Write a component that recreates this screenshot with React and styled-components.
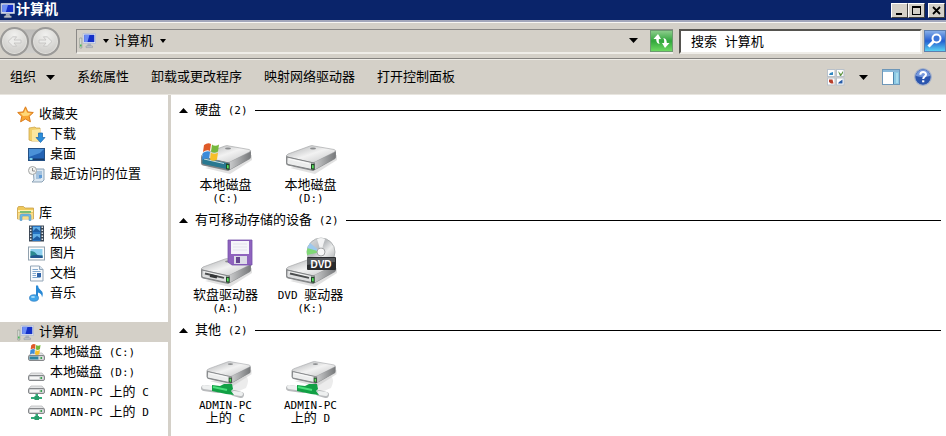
import React from "react";
import styled, { createGlobalStyle, css } from "styled-components";

const GlobalStyle = createGlobalStyle`
  * { box-sizing: border-box; }
  html, body { margin: 0; }
  body, button, input {
    font-family: "Liberation Mono", "Noto Sans CJK SC", sans-serif;
    font-size: 13px;
    line-height: 20px;
    color: #000;
  }
  button { border: 0; padding: 0; background: none; }
  svg { display: block; flex: none; overflow: visible; }
`;

const Window = styled.div`
  display: flex;
  flex-direction: column;
  height: 100vh;
  overflow: hidden;
  background: #d4d0c8;
`;

const TitleBar = styled.header`
  display: flex;
  align-items: center;
  flex: none;
  height: 20px;
  padding-right: 1px;
  background: #0a246a;
`;

const Title = styled.h1`
  flex: 1;
  margin: 0;
  padding-left: 1px;
  font-size: 14px;
  line-height: 20px;
  font-weight: 700;
  color: #fff;
`;

const CaptionButton = styled.button`
  display: grid;
  place-items: center;
  width: 17px;
  height: 15px;
  margin-left: ${(p) => (p.$apart ? "3px" : "0")};
  background: #d4d0c8;
  border: 1px solid;
  border-color: #fff #404040 #404040 #fff;
`;

const AddressRow = styled.div`
  display: flex;
  align-items: center;
  flex: none;
  height: 39px;
  padding-top: 2px;
  border-top: 2px solid #a3a7bb;
  border-bottom: 1px solid #858380;
  box-shadow: inset 0 1px #f8f7f4;
`;

const NavButtons = styled.div`
  display: flex;
  gap: 2px;
  width: 60px;
  margin-right: 16px;
  border-radius: 15px;
  background: linear-gradient(#d4d0c8 8%, #bdbcba 9%, #cfcecb 88%, #d4d0c8 89%);
`;

const NavButton = styled.button`
  display: grid;
  place-items: center;
  width: 29px;
  height: 29px;
  border: 2px solid #9b9a98;
  border-radius: 50%;
  background: radial-gradient(circle at 50% 25%, #f1f1ef, #d6d5d2 60%, #c6c5c2);
  box-shadow: inset 0 0 1px 1px #e4e3df;
`;

const AddressField = styled.div`
  display: flex;
  align-items: center;
  flex: 1;
  min-width: 0;
  height: 25px;
  border: 1px solid;
  border-width: 1px 0 2px 1px;
  border-color: #8b8987 #efede8 #efede8 #8b8987;
`;

const Crumb = styled.button`
  display: flex;
  align-items: center;
  gap: 7px;
  margin-left: ${(p) => (p.$first ? "2px" : "5px")};
`;

const Spacer = styled.span`
  flex: 1;
`;

const RefreshButton = styled.button`
  width: 23px;
  height: 22px;
  margin-left: 12px;
`;

const SearchBox = styled.form`
  display: flex;
  align-items: center;
  width: 267px;
  margin-left: 6px;
  gap: 2px;
`;

const SearchInput = styled.input`
  flex: 1;
  min-width: 0;
  height: 25px;
  padding: 2px 0 0 10px;
  border: 2px solid;
  border-color: #55534f #efede8 #efede8 #55534f;
  background: #fff;
  outline: 0;
  &::placeholder { color: #000; opacity: 1; }
`;

const SearchButton = styled.button`
  width: 22px;
  height: 22px;
`;

const CommandBar = styled.div`
  display: flex;
  align-items: center;
  flex: none;
  height: 36px;
  padding: 0 14px 0 10px;
  gap: 22px;
  border-top: 1px solid #efede8;
  border-bottom: 1px solid #e8e5df;
`;

const Command = styled.button`
  display: flex;
  align-items: center;
  gap: 10px;
  white-space: nowrap;
`;

const ViewTools = styled.div`
  display: flex;
  align-items: center;
  margin-left: auto;
  gap: 14px;
`;

const Body = styled.div`
  display: flex;
  flex: 1;
  min-height: 0;
  background: #fff;
`;

const Sidebar = styled.nav`
  display: flex;
  flex-direction: column;
  flex: none;
  gap: 19px;
  width: 171px;
  padding-top: 9px;
  border-right: 3px solid #d4d0c8;
`;

const NavList = styled.ul`
  margin: 0;
  padding: 0;
  list-style: none;
`;

const NavLink = styled.a`
  display: flex;
  align-items: center;
  gap: 4px;
  height: 20px;
  padding-left: ${(p) => (p.$child ? "28px" : "17px")};
  color: #000;
  text-decoration: none;
  white-space: nowrap;
  ${(p) => p.$selected && css`background: #d4d0c8;`}
`;

const Label = styled.span`
  padding-top: 2px;
`;

const Latin = styled.span`
  font-family: "DejaVu Sans Mono", monospace;
  font-size: 11px;
  white-space: pre;
`;

const Content = styled.main`
  flex: 1;
  min-width: 0;
  padding: 5px 5px 0 8px;
`;

const Group = styled.section`
  padding-bottom: 5px;
`;

const GroupHeader = styled.h2`
  display: flex;
  align-items: center;
  gap: 7px;
  margin: 0;
  height: 20px;
  font-size: 13px;
  font-weight: 400;
  white-space: nowrap;
  &::after {
    content: "";
    flex: 1;
    height: 1px;
    background: #000;
  }
`;

const Tiles = styled.div`
  display: flex;
  flex-wrap: wrap;
  padding: 8px 0 0 4px;
`;

const Tile = styled.button`
  display: flex;
  flex-direction: column;
  align-items: center;
  gap: 3px;
  width: 85px;
`;

const TileLabel = styled.span`
  display: flex;
  flex-direction: column;
  align-items: center;
  line-height: 13px;
  white-space: nowrap;
`;

const TileLine = styled.span`
  height: 13px;
  line-height: 13px;
`;

/* Wraps half-width runs so that they keep a narrower pitch than the Chinese text. */
function Text({ children }) {
  return children
    .split(/([\x20-\x7e]+)/)
    .filter(Boolean)
    .map((part, i) => (/^[\x20-\x7e]/.test(part) ? <Latin key={i}>{part}</Latin> : part));
}

function Triangle({ size = 7, up }) {
  return (
    <svg width={size} height={size > 6 ? 5 : 4} viewBox="0 0 8 5" preserveAspectRatio="none">
      <path d={up ? "M0 5L4 0L8 5Z" : "M0 0H8L4 5Z"} fill="#000" />
    </svg>
  );
}

function Monitor() {
  return (
    <g>
      <path d="M4 1.5h12.5v10H4z" fill="#dfe4ee" stroke="#b4bdd0" strokeWidth=".8" />
      <path d="M5.3 2.8h10v7.3h-10z" fill="#1430c8" />
      <path d="M5.3 2.8h5.2l-2 7.3H5.3z" fill="#6d8df4" />
      <path d="M8.8 11.6h3l.7 2.4H8z" fill="#aab1bd" />
      <path d="M7 14h6.5v1.6H7z" fill="#c6cbd3" stroke="#8c929d" strokeWidth=".5" />
    </g>
  );
}

function TitleIcon() {
  return (
    <svg width="15" height="17" viewBox="3 0 14 17" preserveAspectRatio="none">
      <Monitor />
    </svg>
  );
}

function ComputerIcon() {
  return (
    <svg width="17" height="17" viewBox="0 0 17 17">
      <path d="M.8 6h2v10h-2z" fill="#e8ece6" stroke="#8a948a" strokeWidth=".7" />
      <path d="M1.1 12.500h1.400v2H1.1z" fill="#35b44a" />
      <Monitor />
    </svg>
  );
}

function Arrow({ right }) {
  return (
    <svg width="17" height="17" viewBox="0 0 17 17">
      <path
        d={right ? "M2 7h7L6.4 3.8h3.8L15 8.5l-4.8 4.7H6.4L9 10H2z" : "M15 7H8l2.6-3.2H6.8L2 8.5l4.8 4.7h3.8L8 10h7z"}
        fill="#ececea"
        stroke="#c3c2c0"
        strokeWidth=".8"
      />
    </svg>
  );
}

function RefreshIcon() {
  return (
    <svg width="23" height="22" viewBox="0 0 23 22">
      <defs>
        <linearGradient id="refresh" x2="0" y2="1">
          <stop stopColor="#8fce8e" />
          <stop offset=".5" stopColor="#31a63c" />
          <stop offset="1" stopColor="#6fdb63" />
        </linearGradient>
      </defs>
      <rect x=".5" y=".5" width="22" height="21" fill="url(#refresh)" stroke="#6d9a70" />
      <path d="M8 4L3.5 9h2.7c0 3 1 4.500 3.500 5-1-1.500-1-3-.8-5H11z" fill="#fff" />
      <path d="M15 18l4.500-5h-2.700c0-3-1-4.500-3.500-5 1 1.500 1 3 .8 5H12z" fill="#fff" />
    </svg>
  );
}

function SearchIcon() {
  return (
    <svg width="22" height="22" viewBox="0 0 22 22">
      <defs>
        <linearGradient id="search" x2="0" y2="1">
          <stop stopColor="#8cb3ea" />
          <stop offset=".5" stopColor="#245fd0" />
          <stop offset="1" stopColor="#5bd6f4" />
        </linearGradient>
      </defs>
      <rect x=".5" y=".5" width="21" height="21" fill="url(#search)" stroke="#5e7fae" />
      <circle cx="12.5" cy="8.5" r="4" fill="#3d76d8" stroke="#fff" strokeWidth="2" />
      <path d="M9.5 11.5L4.5 16.5" stroke="#fff" strokeWidth="3" />
    </svg>
  );
}

function ViewIcon() {
  return (
    <svg width="18" height="17" viewBox="0 0 18 17">
      {[[0.5, 0.5], [9.5, 0.5], [0.5, 9], [9.5, 9]].map(([x, y]) => (
        <rect key={`${x}-${y}`} x={x} y={y} width="7.5" height="7" fill="#fdfdfd" stroke="#b9c1ca" />
      ))}
      <path d="M3 4l3-1v3H2z" fill="#3087c0" />
      <path d="M11 2l3 3 2-3v2l-2 3h-1z" fill="#5d9440" />
      <path d="M2 10.5h3.5l1 4H4l-2-1.5z" fill="#b83f2a" />
      <path d="M12 13l3.5-2.500v4H11z" fill="#275ca8" />
    </svg>
  );
}

function PaneIcon() {
  return (
    <svg width="18" height="16" viewBox="0 0 18 16">
      <rect x=".5" y=".5" width="17" height="15" fill="#fff" stroke="#6e97b8" />
      <path d="M1 1h16v2H1z" fill="#8ab9da" />
      <path d="M11 3h6v12h-6z" fill="#8cc9e4" />
      <path d="M11.5 3v12" stroke="#4e85ad" />
      <path d="M14 4h2v10h-2z" fill="#a9dbee" />
    </svg>
  );
}

function HelpIcon() {
  return (
    <svg width="18" height="18" viewBox="0 0 18 18">
      <circle cx="9" cy="9" r="8.3" fill="#2b55ae" stroke="#a7b3cb" strokeWidth="1.2" />
      <path d="M2 8a7 6.5 0 0 1 14 0Q9 10 2 8z" fill="#7698dc" />
      <path d="M6.3 6.8C6.3 3 12 3.2 12 6.5 12 8.5 9.2 8.6 9.2 11" fill="none" stroke="#fff" strokeWidth="2" />
      <path d="M8.1 12.3h2.2v2H8.1z" fill="#fff" />
    </svg>
  );
}

const flag = (
  <g>
    <path d="M2 2Q6-1 9 1L8 8Q5 6 1 9z" fill="#df5a28" />
    <path d="M10 1.500Q13 4 17 1.500L16 8.500Q12 11 9 8.500z" fill="#75b83c" />
    <path d="M.7 10Q5 7 8 9l-1 7q-3-2-7 1z" fill="#3b8bda" />
    <path d="M8.9 9.5Q12 12 16 9.5l-1 7q-4 2.5-7 0z" fill="#f7bf29" />
  </g>
);

const smallDrive = (
  <g>
    <path d="M3 7h11l2.5 3H.5z" fill="#e4e5e6" stroke="#a8aaac" strokeWidth=".6" />
    <rect x=".5" y="9.5" width="16" height="5" rx="1.5" fill="#d2d4d6" stroke="#85878a" />
    <path d="M2 11h9v2H2z" fill="#f5f5f5" />
    <path d="M12.5 11h1.5v2h-1.500z" fill="#38a24d" />
  </g>
);

const sideIcons = {
  star: (
    <>
      <path d="M8.5.8l2.3 5.100 5.500.6-4.100 3.800 1.200 5.500-4.900-2.800-4.900 2.800 1.200-5.500L.7 6.500l5.500-.6z" fill="#f8a633" stroke="#dc7d1c" strokeLinejoin="round" />
      <path d="M8.5 3l1.6 3.700 3.900.5-3 2.500-5 .3-2.500-2.700 3.500-.6z" fill="#ffd878" />
    </>
  ),
  download: (
    <>
      <path d="M1 2l6-1 1 1h4v13H4l-3-1z" fill="#f1cf6b" stroke="#cfa74c" strokeWidth=".8" />
      <path d="M4 4l8-1v12H4z" fill="#fbe79f" />
      <path d="M10.5 7h4v4.5H17L12.5 16.5 8 11.5h2.5z" fill="#2b8edb" stroke="#1764ac" strokeWidth=".7" />
    </>
  ),
  desktop: (
    <>
      <rect x=".5" y="2.5" width="16" height="12" fill="#2463b4" stroke="#245084" />
      <path d="M1 3h15l-4 4-11 4z" fill="#4b91d7" />
      <path d="M1 12.5h15V14H1z" fill="#173b69" />
      <path d="M1.5 12h3v2h-3z" fill="#7bd2ed" />
    </>
  ),
  recent: (
    <>
      <path d="M5 3h11v11l-2 2H4l2-2z" fill="#dce8f2" stroke="#8da3b6" />
      <path d="M8 6h6M8 8h6M8 10h4M8 12h5" stroke="#6c9dcb" />
      <path d="M11 9h3v3h-3z" fill="#5e9ad6" />
      <circle cx="4.5" cy="4.5" r="4" fill="#f3f4f2" stroke="#a4a6a5" />
      <path d="M4.5 2v3H7" fill="none" stroke="#777" strokeWidth=".8" />
    </>
  ),
  library: (
    <>
      <path d="M.5 3l1-1.500h5L8 3h8.500v11H.5z" fill="#efc95b" stroke="#c9a047" strokeWidth=".8" />
      <path d="M1 5h15v2H1z" fill="#fff0b1" />
      <path d="M3 6h11v3H3z" fill="#79bd74" />
      <path d="M1 8h15v6H1z" fill="#f8dc88" />
      <path d="M3 15.5V11q0-2 2-2h7q2 0 2 2v4.5h-2V12q0-1-1-1H6q-1 0-1 1v3.5z" fill="#6fb8e4" stroke="#4b8dbc" strokeWidth=".5" />
    </>
  ),
  video: (
    <>
      <rect x="1" y=".5" width="15" height="16" fill="#3a4654" />
      <path d="M4.500 1h8v15h-8z" fill="#2574c4" />
      <path d="M5 2h7v5H5zM5 9h7v6H5z" fill="#62afe7" />
      <path d="M5 6l3-3 4 3v1H5zM5 14l4-3 3 2v2H5z" fill="#1d5da4" />
      <path d="M2.700 1.500v14.500M14.300 1.500v14.500" stroke="#e0e7ee" strokeWidth="1.5" strokeDasharray="1.5 1.5" />
    </>
  ),
  picture: (
    <>
      <rect x=".5" y="2" width="16" height="13" fill="#fcfdfd" stroke="#91a1ae" />
      <path d="M2.500 4h12v9h-12z" fill="#8ed0ef" />
      <path d="M2.500 6q4 0 6 3t6 1v3h-12z" fill="#2b8a91" />
      <path d="M2.500 11q6-2 12 0v2h-12z" fill="#235790" />
    </>
  ),
  document: (
    <>
      <path d="M2.5 1h9l3.500 3.500V16H2.500z" fill="#f8fafc" stroke="#92a5b7" />
      <path d="M11.5 1v3.500H15" fill="#d4e3ef" stroke="#92a5b7" />
      <path d="M4.5 4.500H10M4.500 6.500h8M4.500 8.500H8M4.500 10.500H8M4.500 12.500h8" stroke="#82a9cf" />
      <path d="M9 8h4v4H9z" fill="#2e63a8" />
    </>
  ),
  music: (
    <>
      <path d="M8 .5h2q0 3 3 5t1 7q0-4-4-5v6.500H8z" fill="#2788d5" />
      <ellipse cx="6" cy="13" rx="4.5" ry="3.3" fill="#40a5e9" stroke="#1c70bc" strokeWidth=".6" />
      <ellipse cx="5" cy="12" rx="2" ry="1" fill="#a4dcfb" />
    </>
  ),
  system: (
    <>
      <g transform="translate(0 2)">
        {smallDrive}
        <path d="M1.5 10.500h9v3h-9z" fill="#2c83a1" />
      </g>
      <g transform="translate(2 0) scale(.62)">{flag}</g>
    </>
  ),
  drive: <g transform="translate(0 2)">{smallDrive}</g>,
  network: (
    <>
      <g transform="translate(0 -5)">{smallDrive}</g>
      <path d="M7.500 10h2.500v3h-2.500zM3 13h11v2H3z" fill="#31aa78" />
      <path d="M6.500 12h4.500v4H6.500z" fill="#2a9d6c" />
    </>
  ),
};

function SideIcon({ name }) {
  if (name === "computer") {
    return (
      <svg width="18" height="17">
        <ComputerIcon />
      </svg>
    );
  }
  return (
    <svg width="18" height="17" viewBox="0 0 18 17">
      {sideIcons[name]}
    </svg>
  );
}

function DriveBody({ front = "#dedfe0", slot }) {
  return (
    <g strokeLinejoin="round">
      <path d="M7 40l25 6 22-14v-5z" fill="#c9c9c9" opacity=".55" />
      <path d="M4 27Q3 27 3 29v6q0 2 2 2.500l25 5.500 2-1 20-11q1-1 1-3v-5z" fill="#898b8d" />
      <path d="M5 26l22-8q2-.8 4 0l20 3.500q3 .8.500 2.500L32 34q-2 1-4 .5L5 29q-3-1.500 0-3z" fill="url(#lid)" stroke="#a7a9ab" strokeWidth=".7" />
      <path d="M32 34l20.500-10v6L32 41.500z" fill="url(#side)" />
      <path d="M4 29l27 6v7L5 36.500q-1.200-.5-1.200-2z" fill={front} stroke="#808284" />
      <path d="M6 31l20 4.500" stroke="#fff" strokeWidth="1" opacity=".75" />
      {slot && <path d="M7 32.500l19 4.300" stroke="#4b4d4e" strokeWidth="1.8" />}
      {slot === "floppy" && <path d="M12 34.500l7 1.600" stroke="#343637" strokeWidth="3" />}
      <path d="M28 35.500l3.500.5v6l-3.500-.7z" fill="#234428" />
      <path d="M29 37l1.700.2v3.300l-1.700-.3z" fill="#58e45d" />
      <ellipse cx="30" cy="20.5" rx="3" ry="1" fill="#8b8d8f" />
    </g>
  );
}

const tileArt = {
  system: (
    <>
      <DriveBody front="#287890" />
      <g transform="translate(4 15)">{flag}</g>
    </>
  ),
  disk: <DriveBody front="#eceded" />,
  floppy: (
    <>
      <g transform="translate(0 3)"><DriveBody slot="floppy" /></g>
      <path d="M30 2h24v25H34l-4-3z" fill="#8f63be" stroke="#7450a8" strokeWidth=".8" />
      <path d="M33 3h18v13H33z" fill="#f5f4fa" />
      <path d="M35 6h14M35 9h14M35 12h14" stroke="#e3e1ec" />
      <path d="M36 18h13v8H36z" fill="#dddce8" />
      <path d="M38 19h4v6h-4z" fill="#65468f" />
    </>
  ),
  dvd: (
    <>
      <g transform="translate(0 3)"><DriveBody slot="dvd" /></g>
      <circle cx="38" cy="14" r="14" fill="url(#disc)" stroke="#a5a8aa" strokeWidth=".8" />
      <path d="M38 14L25 9q-2 4-1 8z" fill="#7fd875" />
      <path d="M38 14L27 5l-3 5z" fill="#9dc9ee" />
      <path d="M38 14L42 1q-4-2-8 0z" fill="#fff" opacity=".8" />
      <circle cx="38" cy="14" r="4" fill="#f8f8f8" stroke="#a3a5a6" />
      <rect x="24" y="19" width="29" height="13" rx="1" fill="#292b2d" />
      <path d="M24 20h28v4q-14 0-28 3z" fill="#55585b" />
      <text x="38" y="30" textAnchor="middle" fontFamily="Liberation Sans, sans-serif" fontWeight="700" fontSize="10" fill="#fff">DVD</text>
    </>
  ),
  network: (
    <>
      <path d="M20 40l28-12q4 3 0 12l-12 5z" fill="#ececec" />
      <g transform="translate(6 -2) scale(.88)"><DriveBody front="#eceded" /></g>
      <path d="M6 40l14 2M36 45l7 2" stroke="#b9bbbd" strokeWidth="6" strokeLinecap="round" />
      <path d="M6 39l14 2M36 45l7 1" stroke="#eef0f0" strokeWidth="4" strokeLinecap="round" />
      <path d="M14 37l8 1 4-2h8l1 5-2 2 3 4-8-1-14-3z" fill="#12a045" />
      <path d="M15 39l14 3" stroke="#4be07c" strokeWidth="2" />
    </>
  ),
};

function TileIcon({ name }) {
  return (
    <svg width="56" height="48" viewBox="0 0 56 48">
      <defs>
        <linearGradient id="lid" x2="1" y2="1">
          <stop stopColor="#aaacae" />
          <stop offset=".5" stopColor="#f2f2f2" />
          <stop offset="1" stopColor="#c2c3c4" />
        </linearGradient>
        <linearGradient id="side" x2="1">
          <stop stopColor="#c8c9ca" />
          <stop offset="1" stopColor="#77797b" />
        </linearGradient>
        <linearGradient id="disc" x2="1" y2="1">
          <stop stopColor="#dfe1e3" />
          <stop offset=".4" stopColor="#b9bcbf" />
          <stop offset=".6" stopColor="#eceded" />
          <stop offset="1" stopColor="#989b9e" />
        </linearGradient>
      </defs>
      {tileArt[name]}
    </svg>
  );
}

const places = [
  [
    ["star", "收藏夹"],
    ["download", "下载"],
    ["desktop", "桌面"],
    ["recent", "最近访问的位置"],
  ],
  [
    ["library", "库"],
    ["video", "视频"],
    ["picture", "图片"],
    ["document", "文档"],
    ["music", "音乐"],
  ],
  [
    ["computer", "计算机"],
    ["system", "本地磁盘 (C:)"],
    ["drive", "本地磁盘 (D:)"],
    ["network", "ADMIN-PC 上的 C"],
    ["network", "ADMIN-PC 上的 D"],
  ],
];

const groups = [
  { title: "硬盘 (2)", items: [["system", "本地磁盘", "(C:)"], ["disk", "本地磁盘", "(D:)"]] },
  { title: "有可移动存储的设备 (2)", items: [["floppy", "软盘驱动器", "(A:)"], ["dvd", "DVD 驱动器", "(K:)"]] },
  { title: "其他 (2)", items: [["network", "ADMIN-PC", "上的 C"], ["network", "ADMIN-PC", "上的 D"]] },
];

export default function App() {
  return (
    <Window>
      <GlobalStyle />
      <TitleBar>
        <TitleIcon />
        <Title>计算机</Title>
        <CaptionButton aria-label="最小化">
          <svg width="11" height="9"><path d="M2 7h6v2H2z" /></svg>
        </CaptionButton>
        <CaptionButton aria-label="最大化">
          <svg width="11" height="9"><path d="M1 0h9v9H1zM2 2v6h7V2z" fillRule="evenodd" /></svg>
        </CaptionButton>
        <CaptionButton aria-label="关闭" $apart>
          <svg width="11" height="9"><path d="M2 1l7 7M9 1L2 8" stroke="#000" strokeWidth="1.8" /></svg>
        </CaptionButton>
      </TitleBar>

      <AddressRow>
        <NavButtons>
          <NavButton aria-label="后退"><Arrow /></NavButton>
          <NavButton aria-label="前进"><Arrow right /></NavButton>
        </NavButtons>
        <AddressField>
          <Crumb $first aria-label="位置">
            <ComputerIcon />
            <Triangle size={6} />
          </Crumb>
          <Crumb>
            <Label>计算机</Label>
            <Triangle size={6} />
          </Crumb>
          <Spacer />
          <button aria-label="以前的位置"><Triangle size={9} /></button>
          <RefreshButton aria-label="刷新"><RefreshIcon /></RefreshButton>
        </AddressField>
        <SearchBox onSubmit={(e) => e.preventDefault()}>
          <SearchInput aria-label="搜索" placeholder="搜索 计算机" />
          <SearchButton aria-label="开始搜索"><SearchIcon /></SearchButton>
        </SearchBox>
      </AddressRow>

      <CommandBar>
        <Command><Label>组织</Label> <Triangle size={9} /></Command>
        <Command><Label>系统属性</Label></Command>
        <Command><Label>卸载或更改程序</Label></Command>
        <Command><Label>映射网络驱动器</Label></Command>
        <Command><Label>打开控制面板</Label></Command>
        <ViewTools>
          <Command aria-label="更改视图"><ViewIcon /></Command>
          <Command aria-label="更多选项"><Triangle size={9} /></Command>
          <Command aria-label="预览窗格"><PaneIcon /></Command>
          <Command aria-label="帮助"><HelpIcon /></Command>
        </ViewTools>
      </CommandBar>

      <Body>
        <Sidebar aria-label="位置">
          {places.map((list) => (
            <NavList key={list[0][1]}>
              {list.map(([icon, label], i) => (
                <li key={label}>
                  <NavLink href="#" $child={i > 0} $selected={icon === "computer"}>
                    <SideIcon name={icon} />
                    <Label><Text>{label}</Text></Label>
                  </NavLink>
                </li>
              ))}
            </NavList>
          ))}
        </Sidebar>
        <Content>
          {groups.map(({ title, items }) => (
            <Group key={title}>
              <GroupHeader>
                <Triangle size={9} up />
                <Label><Text>{title}</Text></Label>
              </GroupHeader>
              <Tiles>
                {items.map(([icon, first, second]) => (
                  <Tile key={first + second}>
                    <TileIcon name={icon} />
                    <TileLabel>
                      <TileLine><Text>{first}</Text></TileLine>
                      <TileLine><Text>{second}</Text></TileLine>
                    </TileLabel>
                  </Tile>
                ))}
              </Tiles>
            </Group>
          ))}
        </Content>
      </Body>
    </Window>
  );
}
